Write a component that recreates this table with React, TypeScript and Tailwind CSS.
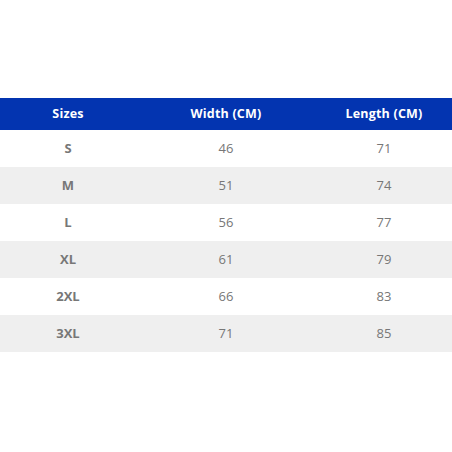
import React from 'react';

const rows = [
  { size: 'S', width: 46, length: 71 },
  { size: 'M', width: 51, length: 74 },
  { size: 'L', width: 56, length: 77 },
  { size: 'XL', width: 61, length: 79 },
  { size: '2XL', width: 66, length: 83 },
  { size: '3XL', width: 71, length: 85 },
];

export default function App() {
  return (
    <div
      className="w-[452px] h-[452px] bg-white pt-[98px]"
      style={{ fontFamily: '"Open Sans", "Liberation Sans", sans-serif' }}
    >
      <div className="grid grid-cols-[136px_180px_136px] h-[32px] items-center bg-[#0334b0] text-white text-[12.5px] font-bold tracking-[0.2px]">
        <div className="text-center">Sizes</div>
        <div className="text-center">Width (CM)</div>
        <div className="text-center">Length (CM)</div>
      </div>
      {rows.map((r, i) => (
        <div
          key={r.size}
          className={`grid grid-cols-[136px_180px_136px] h-[37px] items-center text-[13px] text-[#777777] ${
            i % 2 === 1 ? 'bg-[#efefef]' : 'bg-white'
          }`}
        >
          <div className="text-center font-bold">{r.size}</div>
          <div className="text-center">{r.width}</div>
          <div className="text-center">{r.length}</div>
        </div>
      ))}
    </div>
  );
}
